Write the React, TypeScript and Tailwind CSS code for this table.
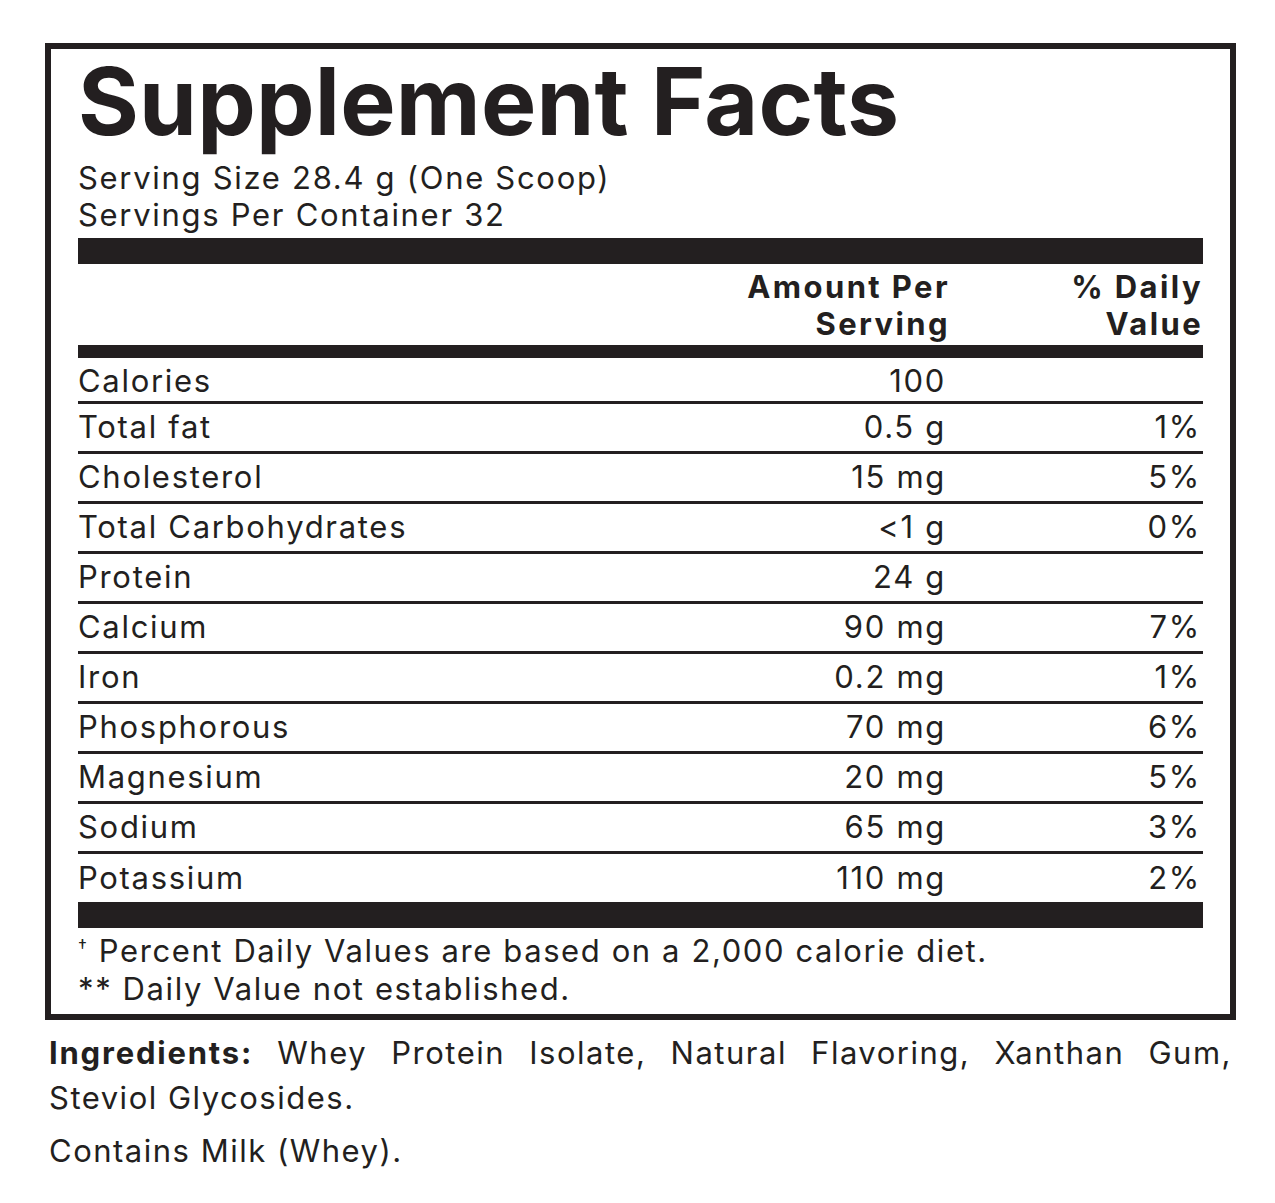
import React from 'react';

const rows: { name: string; amount: string; dv: string }[] = [
  { name: 'Calories', amount: '100', dv: '' },
  { name: 'Total fat', amount: '0.5 g', dv: '1%' },
  { name: 'Cholesterol', amount: '15 mg', dv: '5%' },
  { name: 'Total Carbohydrates', amount: '<1 g', dv: '0%' },
  { name: 'Protein', amount: '24 g', dv: '' },
  { name: 'Calcium', amount: '90 mg', dv: '7%' },
  { name: 'Iron', amount: '0.2 mg', dv: '1%' },
  { name: 'Phosphorous', amount: '70 mg', dv: '6%' },
  { name: 'Magnesium', amount: '20 mg', dv: '5%' },
  { name: 'Sodium', amount: '65 mg', dv: '3%' },
  { name: 'Potassium', amount: '110 mg', dv: '2%' },
];

export default function App() {
  return (
    <div className="w-[1275px] h-[1203px] bg-white pt-[43px] pl-[45px] text-[#231f20] font-['Inter',sans-serif]">
      <div className="w-[1191px] border-[6px] border-[#231f20] pl-[27px] pr-[27px] pb-[6px]">
        <h1 className="text-[93px] font-bold leading-[93px] mt-[6px] tracking-[0.2px]">Supplement Facts</h1>
        <div className="text-[31px] leading-[37px] mt-[11px] tracking-[1.7px]">
          <div>Serving Size 28.4 g (One Scoop)</div>
          <div>Servings Per Container 32</div>
        </div>

        <div className="h-[26px] bg-[#231f20] mt-[5px]" />

        <div className="grid grid-cols-[1fr_260px_257px] text-[31px] font-bold leading-[37px] pt-[4px] pb-[3px] tracking-[2.4px]">
          <div />
          <div className="text-right -mr-[4px]">
            Amount Per
            <br />
            Serving
          </div>
          <div className="text-right">
            % Daily
            <br />
            Value
          </div>
        </div>

        <div className="h-[13px] bg-[#231f20]" />

        {rows.map((r, i) => (
          <div
            key={r.name}
            className={
              'grid grid-cols-[1fr_260px_257px] items-center text-[31px] tracking-[1.7px] ' +
              (i === 0 ? 'h-[46px] pb-[3px] ' : i === rows.length - 1 ? 'h-[48px] ' : 'h-[50px] ') +
              (i < rows.length - 1 ? 'border-b-[3px] border-[#231f20]' : '')
            }
          >
            <div>{r.name}</div>
            <div className="text-right">{r.amount}</div>
            <div className="text-right pr-[2px]">{r.dv}</div>
          </div>
        ))}

        <div className="h-[26px] bg-[#231f20]" />

        <div className="text-[31px] leading-[38px] mt-[4px] tracking-[1.6px]">
          <div>
            <span className="text-[18px] align-top leading-[30px]">†</span> Percent Daily Values are based on a 2,000 calorie diet.
          </div>
          <div>** Daily Value not established.</div>
        </div>
      </div>

      <div className="w-[1191px] px-[4px] text-[31px] mt-[10px] tracking-[1.5px]">
        <div className="text-justify [text-align-last:justify] leading-[45px] whitespace-nowrap flex justify-between">
          <span className="font-bold tracking-[1.8px]">Ingredients:</span>
          <span>Whey</span>
          <span>Protein</span>
          <span>Isolate,</span>
          <span>Natural</span>
          <span>Flavoring,</span>
          <span>Xanthan</span>
          <span>Gum,</span>
        </div>
        <div className="leading-[45px]">Steviol Glycosides.</div>
        <div className="leading-[45px] mt-[8px]">Contains Milk (Whey).</div>
      </div>
    </div>
  );
}
